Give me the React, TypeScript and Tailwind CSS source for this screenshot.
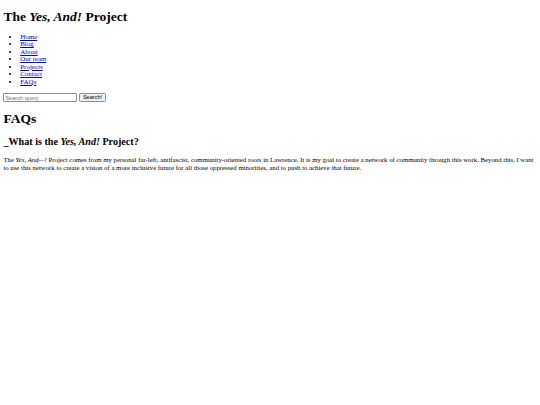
export default function App() {
  const links = ["Home", "Blog", "About", "Our team", "Projects", "Contact", "FAQs"];

  return (
    <div className="m-[3.4px] font-['Liberation_Serif',serif] text-[6.75px] leading-[1.15] text-black">
      <h1 className="my-[0.67em] text-[2em] font-bold">
        The <em>Yes, And!</em> Project
      </h1>
      <ul className="my-[6.75px] list-disc pl-[16.8px] text-[7px] leading-[7.5px]">
        {links.map((l) => (
          <li key={l}>
            <a href="#" className="text-[#0000ee] underline">
              {l}
            </a>
          </li>
        ))}
      </ul>
      <form className="flex items-center gap-[2px]" onSubmit={(e) => e.preventDefault()}>
        <input
          type="text"
          placeholder="Search query"
          className="h-[9.5px] w-[74px] rounded-[1px] border border-[#8f8f8f] bg-white px-[1px] font-['Liberation_Sans',sans-serif] text-[5.6px] placeholder:text-[#757575]"
        />
        <button
          type="submit"
          className="h-[9.5px] rounded-[1.5px] border border-[#8f8f8f] bg-[#efefef] px-[2.5px] font-['Liberation_Sans',sans-serif] text-[5.6px] leading-none text-black"
        >
          Search!
        </button>
      </form>
      <h1 className="my-[0.67em] text-[2em] font-bold">FAQs</h1>
      <h2 className="my-[0.83em] text-[1.5em] font-bold">
        _What is the <em>Yes, And!</em> Project?
      </h2>
      <p className="my-[6.75px] text-[6.78px] leading-[8px]">
        The <em>Yes, And—!</em> Project comes from my personal far-left, antifascist, community-oriented roots in Lawrence. It is my goal to create a network of community through this work. Beyond this, I want to use this network to create a vision of a more inclusive future for all those oppressed minorities, and to push to achieve that future.
      </p>
    </div>
  );
}
